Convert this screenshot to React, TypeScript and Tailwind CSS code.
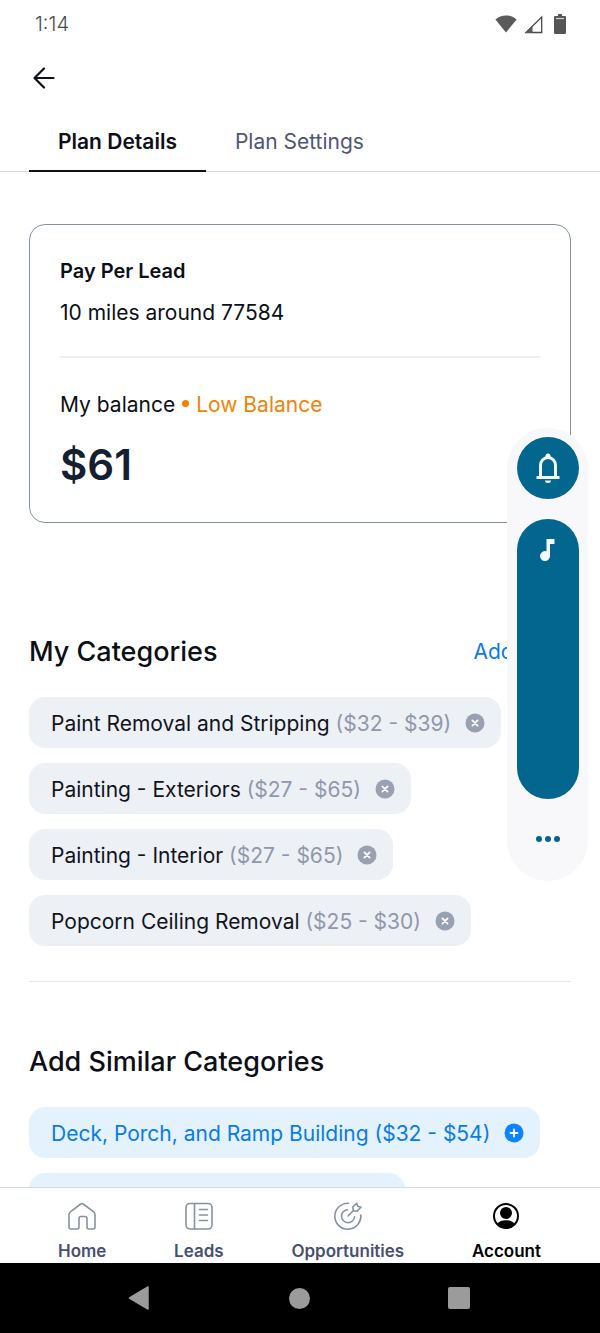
import { type ReactNode, useState } from "react";

interface Category {
  name: string;
  price: string;
}

const myCategories: Category[] = [
  { name: "Paint Removal and Stripping", price: "($32 - $39)" },
  { name: "Painting - Exteriors", price: "($27 - $65)" },
  { name: "Painting - Interior", price: "($27 - $65)" },
  { name: "Popcorn Ceiling Removal", price: "($25 - $30)" },
];

const similarCategories: Category[] = [
  { name: "Deck, Porch, and Ramp Building", price: "($32 - $54)" },
];

function StatusBar() {
  return (
    <div className="flex h-12 shrink-0 items-center justify-between pl-[35px] pr-[34px] text-[#4a4a4a]">
      <span className="text-xl font-light">1:14</span>
      <div className="flex items-center gap-[7px]">
        <svg width="22" height="18" viewBox="0 0 22 18" fill="#5a5a5a" aria-hidden="true">
          <path d="M11 17.5 0.4 4.6C3.4 1.8 7 .5 11 .5s7.600 1.300 10.600 4.100z" />
        </svg>
        <svg width="19" height="19" viewBox="0 0 19 19" aria-hidden="true">
          <path d="M2 17.500 17.700 2v15.500z" fill="none" stroke="#4a4a4a" strokeWidth="1.300" />
          <path d="M1 18 8.500 10.500V18z" fill="#5a5a5a" />
        </svg>
        <svg className="ml-1" width="12" height="20" viewBox="0 0 12 20" aria-hidden="true">
          <path d="M4 0h4v2h3q1 0 1 1v16q0 1-1 1H1q-1 0-1-1V3q0-1 1-1h3z" fill="#555" />
          <path d="M2 4.500h8" stroke="#d4d4d4" strokeWidth="1.200" />
        </svg>
      </div>
    </div>
  );
}

function Tab({ active, onClick, children }: { active: boolean; onClick: () => void; children: ReactNode }) {
  return (
    <button
      role="tab"
      aria-selected={active}
      onClick={onClick}
      className={[
        "-mb-px h-16 border-b-2 px-[29px] pt-[6px] text-[21px]",
        active
          ? "border-[#0c111d] font-semibold text-[#0c0f1a]"
          : "border-transparent text-[#4d5774]",
      ].join(" ")}
    >
      {children}
    </button>
  );
}

function Chip({ category, similar = false }: { category: Category; similar?: boolean }) {
  return (
    <li
      className={[
        "flex h-[51px] items-center rounded-2xl pl-[22px] pr-4 text-[21px]",
        similar ? "bg-[#e4f2fe] text-[#0a7be4]" : "bg-[#edf0f5] text-[#11141d]",
      ].join(" ")}
    >
      <span className="pt-[3px]">
        {category.name}{" "}
        <span className={similar ? "" : "text-[#8f98aa]"}>{category.price}</span>
      </span>
      <button
        className="ml-[14px]"
        aria-label={(similar ? "Add " : "Remove ") + category.name}
      >
        <svg width="20" height="20" viewBox="0 0 20 20" fill="none" stroke="#fff" strokeWidth="1.800" strokeLinecap="round">
          <circle cx="10" cy="10" r="9.500" fill={similar ? "#0a84ff" : "#98a1b1"} stroke="none" />
          {similar ? (
            <path d="M10 6.500v7M6.500 10h7" />
          ) : (
            <path d="m7.400 7.400 5.200 5.200M12.600 7.400l-5.200 5.200" />
          )}
        </svg>
      </button>
    </li>
  );
}

function NavItem({ label, active = false, children }: { label: string; active?: boolean; children: ReactNode }) {
  return (
    <a
      href="#"
      aria-current={active ? "page" : undefined}
      className={[
        "flex flex-col items-center gap-[11px] text-[17px] leading-5 font-semibold",
        active ? "text-black" : "text-[#475170]",
      ].join(" ")}
    >
      <svg width="28" height="28" viewBox="0 0 28 28" fill="none" stroke="#8791a5" strokeWidth="1.600" strokeLinecap="round" strokeLinejoin="round" aria-hidden="true">
        {children}
      </svg>
      {label}
    </a>
  );
}

function BottomNav() {
  return (
    <nav className="flex h-[76px] shrink-0 justify-between border-t border-[#d5d9e1] bg-white pt-[14px] pr-[59px] pl-[58px]">
      <NavItem label="Home">
        <path d="M14 1.500q.6 0 1.200.5l10.200 7.700q1.600 1.200 1.600 3V25q0 2-2 2h-4q-2 0-2-2v-8.500q0-2-2-2h-4q-2 0-2 2V25q0 2-2 2H3q-2 0-2-2V12.700q0-1.800 1.600-3L12.800 2q.6-.5 1.200-.5z" />
      </NavItem>
      <NavItem label="Leads">
        <rect x="1" y="1.500" width="26" height="25.500" rx="4" />
        <path d="M9.500 1.500V27M14.500 7.500h8M14.500 13h8M14.500 18.500h8" />
      </NavItem>
      <NavItem label="Opportunities">
        <path d="M14.500 1.200A13 13 0 1 0 26.800 13" />
        <path d="M13.500 7.700a6.500 6.500 0 1 0 7 7" />
        <path d="m14 14 5.500-5.500M19.300 8.700l-.5-3.700 3.900-3.800 1 3.100 3.300 1-3.900 3.800z" />
      </NavItem>
      <NavItem label="Account" active>
        <circle cx="14" cy="14" r="12" stroke="#000" strokeWidth="2" />
        <circle cx="14" cy="11" r="6" fill="#000" stroke="none" />
        <path d="M5.500 22c1.500-2.800 4.500-3.700 8.500-3.700s7 .900 8.500 3.700c-2 2.600-5 4-8.500 4s-6.500-1.400-8.500-4z" fill="#000" stroke="none" />
      </NavItem>
    </nav>
  );
}

function SystemNav() {
  return (
    <div className="flex h-[70px] shrink-0 items-center justify-between bg-black pr-[130px] pl-[128px]">
      <button aria-label="Back">
        <svg width="22" height="24" viewBox="0 0 22 24">
          <path d="M20 1v22L1.500 12z" fill="#9b9b9b" stroke="#9b9b9b" strokeWidth="1.500" strokeLinejoin="round" />
        </svg>
      </button>
      <button aria-label="Home screen" className="size-[21px] rounded-full bg-[#9b9b9b]" />
      <button aria-label="Recent apps" className="size-[22px] rounded-xs bg-[#9b9b9b]" />
    </div>
  );
}

function VolumePanel() {
  const [volume, setVolume] = useState(100);

  return (
    <div className="fixed top-[428px] right-3 flex w-[81px] flex-col items-center gap-5 rounded-full bg-[#f8f8fb] pt-[9px] pb-[22px]">
      <button aria-label="Ringer" className="flex size-[62px] items-center justify-center rounded-full bg-[#02668e]">
        <svg width="24" height="30" viewBox="0 0 24 30" fill="none" stroke="#f4f7fb" strokeWidth="3" aria-hidden="true">
          <path d="M4.500 24V12.500a7.500 8 0 0 1 15 0V24" />
          <path d="M.5 24.500h23" />
          <path d="M9.500 4.500V3a2.500 2.500 0 0 1 5 0v1.500z" fill="#f4f7fb" stroke="none" />
          <path d="M9 27.500h6a3 2.500 0 0 1-6 0z" fill="#f4f7fb" stroke="none" />
        </svg>
      </button>
      <div className="relative flex">
        <input
          type="range"
          aria-label="Media volume"
          value={volume}
          onChange={(e) => setVolume(Number(e.target.value))}
          className="h-[280px] w-[62px] appearance-none overflow-hidden rounded-full bg-[#02668e] [direction:rtl] [writing-mode:vertical-lr] [&::-webkit-slider-thumb]:size-0 [&::-webkit-slider-thumb]:appearance-none"
        />
        <svg className="pointer-events-none absolute top-5 left-[22px]" width="16" height="22" viewBox="0 0 16 22" fill="#f4f7fb" aria-hidden="true">
          <path d="M7.500 0H15.500v5h-4.500v12a5 5 0 1 1-3.500-4.800z" />
        </svg>
      </div>
      <button aria-label="More sound settings" className="flex h-10 items-center px-4">
        <svg width="24" height="6" viewBox="0 0 24 6" fill="#02668e" aria-hidden="true">
          <circle cx="3" cy="3" r="3" />
          <circle cx="12" cy="3" r="3" />
          <circle cx="21" cy="3" r="3" />
        </svg>
      </button>
    </div>
  );
}

export default function App() {
  const [tab, setTab] = useState("details");

  return (
    <div className="flex h-screen flex-col bg-white font-['Inter',sans-serif] text-[#0c0f18]">
      <StatusBar />

      <header className="shrink-0 border-b border-[#d5d9e1]">
        <div className="flex h-[60px] items-center pl-[33px]">
          <button aria-label="Go back">
            <svg width="22" height="22" viewBox="0 0 22 22" fill="none" stroke="#0c111d" strokeWidth="2.200" strokeLinecap="round" strokeLinejoin="round">
              <path d="M20.500 11H1.500M11 1.500 1.500 11l9.500 9.500" />
            </svg>
          </button>
        </div>
        <div role="tablist" className="flex pl-[29px]">
          <Tab active={tab === "details"} onClick={() => setTab("details")}>
            Plan Details
          </Tab>
          <Tab active={tab === "settings"} onClick={() => setTab("settings")}>
            Plan Settings
          </Tab>
        </div>
      </header>

      <main className="min-h-0 flex-1 overflow-y-auto px-[29px] pt-[52px] [scrollbar-width:none]">
        <section className="rounded-2xl border border-[#8590a4] px-[30px] pt-8 pb-[31px] text-[21px] leading-7">
          <h2 className="text-xl leading-7 font-semibold">Pay Per Lead</h2>
          <p className="mt-[14px]">10 miles around 77584</p>
          <hr className="mt-[29px] mb-[33px] border-t-2 border-[#efefef]" />
          <p className="flex items-center">
            My balance
            <span className="mx-[7px] mb-[3px] size-[7px] rounded-full bg-[#f48000]" />
            <span className="text-[#f08407]">Low Balance</span>
          </p>
          <p className="mt-5 text-[42px] leading-[52px] font-semibold text-[#151f31]">$61</p>
        </section>

        <section className="mt-[111px]">
          <div className="flex items-center justify-between">
            <h2 className="text-[27px] leading-9 font-medium">My Categories</h2>
            <a href="#" className="text-[21px] text-[#0a7be4]">
              Add More
            </a>
          </div>
          <ul className="mt-[27px] flex flex-col items-start gap-[15px]">
            {myCategories.map((c) => (
              <Chip key={c.name} category={c} />
            ))}
          </ul>
        </section>

        <hr className="mt-[35px] mb-[62px] border-[#e4e7ec]" />

        <section>
          <h2 className="text-[27px] leading-9 font-medium">Add Similar Categories</h2>
          <ul className="mt-[27px] flex flex-col items-start gap-[15px]">
            {similarCategories.map((c) => (
              <Chip key={c.name} category={c} similar />
            ))}
            <li aria-hidden="true" className="h-[51px] w-[376px] max-w-full rounded-2xl bg-[#e4f2fe]" />
          </ul>
        </section>
      </main>

      <BottomNav />
      <SystemNav />
      <VolumePanel />
    </div>
  );
}
